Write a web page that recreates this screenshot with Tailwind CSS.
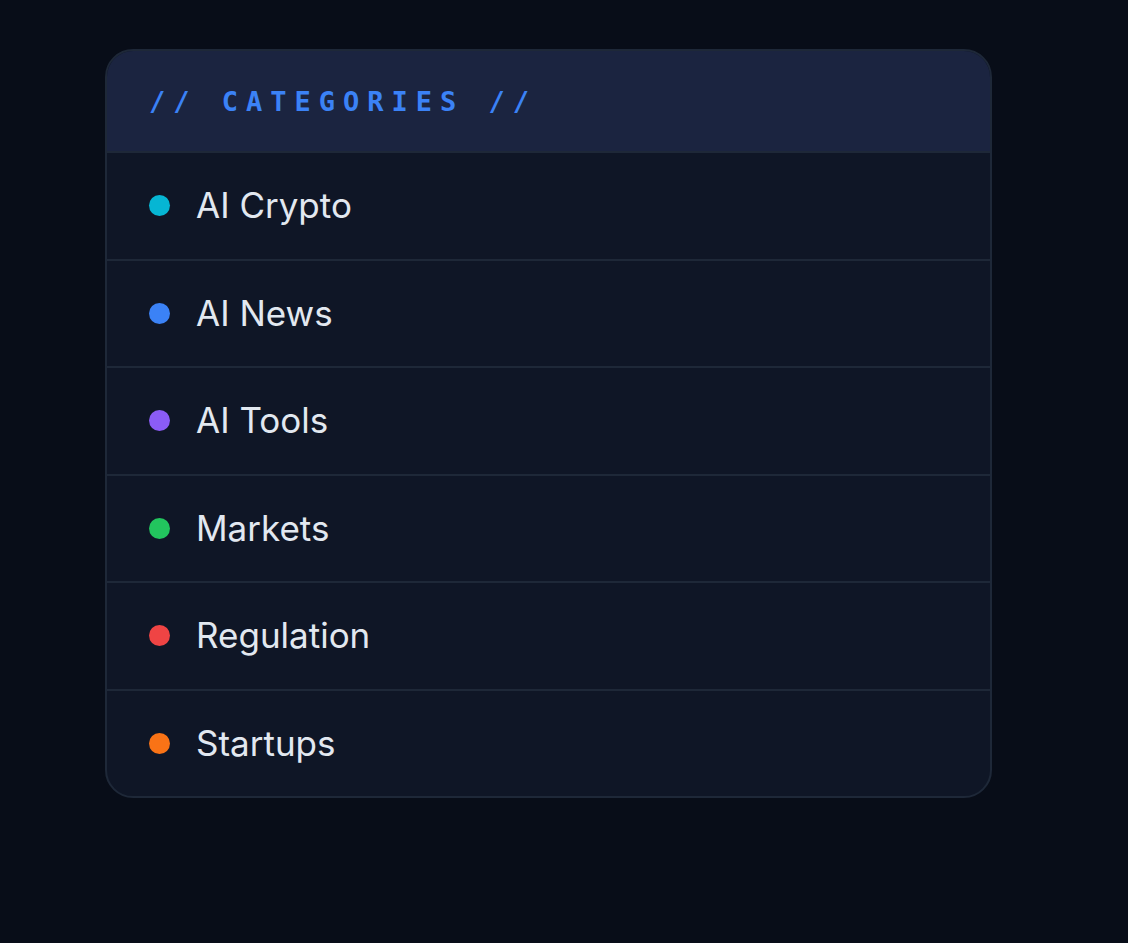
<!DOCTYPE html>
<html lang="en">
<head>
<meta charset="utf-8">
<meta name="viewport" content="width=device-width, initial-scale=1">
<title>Categories</title>
<script src="https://cdn.jsdelivr.net/npm/@tailwindcss/browser@4"></script>
</head>
<body class="min-h-screen bg-[#080d18] pt-[49px] pr-[136px] pb-12 pl-[105px] font-['Inter',sans-serif] text-[#e2e8f0]">
<nav aria-labelledby="categories-title" class="overflow-hidden rounded-[28px] border-2 border-[#1e2838] bg-[#0f1626]">
  <h2 id="categories-title" class="border-b-2 border-[#1e2838] bg-[#1b2440] px-[42px] pt-[31px] pb-[29px] font-['DejaVu_Sans_Mono',monospace] text-[27px] leading-10 font-bold tracking-[8px] text-[#3b82f6]">// CATEGORIES //</h2>
  <ul class="flex min-h-[643px] flex-col divide-y-2 divide-[#1e2838] text-[35px] leading-[53px]">
    <li class="flex-auto"><a href="#ai-crypto" class="flex items-center gap-[26px] px-[42px] py-[26px]"><span class="size-[21px] rounded-full bg-[#06b6d4]"></span>AI Crypto</a></li>
    <li class="flex-auto"><a href="#ai-news" class="flex items-center gap-[26px] px-[42px] py-[26px]"><span class="size-[21px] rounded-full bg-[#3b82f6]"></span>AI News</a></li>
    <li class="flex-auto"><a href="#ai-tools" class="flex items-center gap-[26px] px-[42px] py-[26px]"><span class="size-[21px] rounded-full bg-[#8b5cf6]"></span>AI Tools</a></li>
    <li class="flex-auto"><a href="#markets" class="flex items-center gap-[26px] px-[42px] py-[26px]"><span class="size-[21px] rounded-full bg-[#22c55e]"></span>Markets</a></li>
    <li class="flex-auto"><a href="#regulation" class="flex items-center gap-[26px] px-[42px] py-[26px]"><span class="size-[21px] rounded-full bg-[#ef4444]"></span>Regulation</a></li>
    <li class="flex-auto"><a href="#startups" class="flex items-center gap-[26px] px-[42px] py-[26px]"><span class="size-[21px] rounded-full bg-[#f97316]"></span>Startups</a></li>
  </ul>
</nav>
</body>
</html>
